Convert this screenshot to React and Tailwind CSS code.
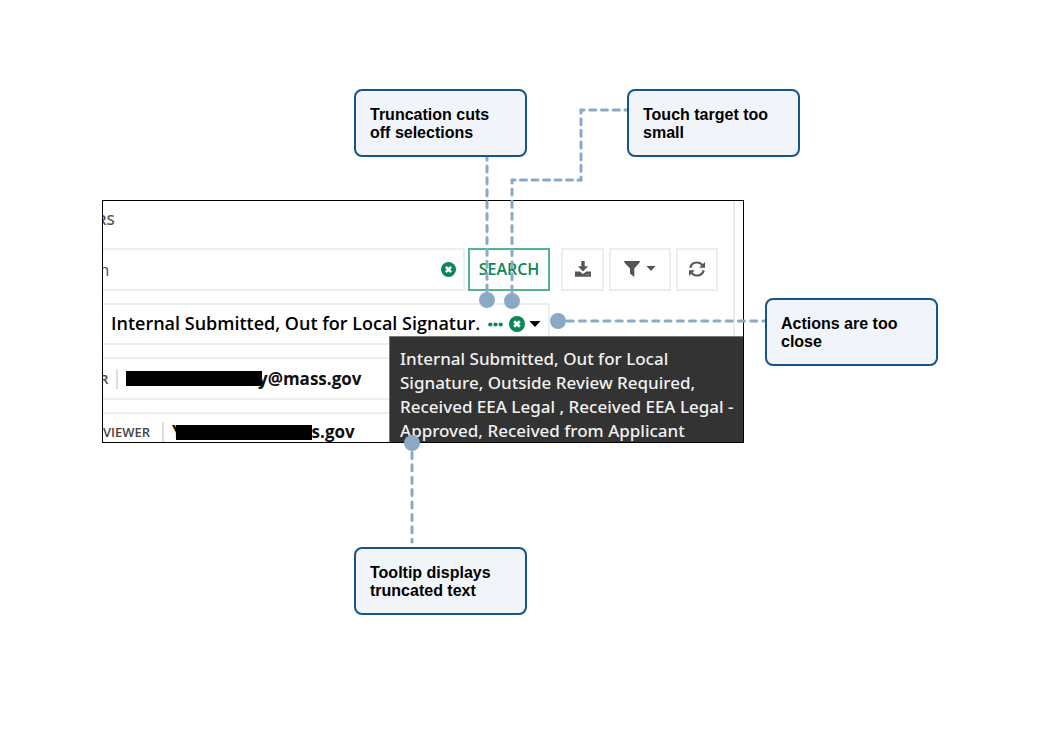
import React from "react";

const DOT = "#8aa9c6";

function XCircle({ className }) {
  return (
    <svg viewBox="0 0 16 16" className={className} aria-hidden="true">
      <circle cx="8" cy="8" r="8" fill="#0a8754" />
      <path d="M5.2 5.2l5.6 5.6M10.8 5.2l-5.6 5.6" stroke="#fff" strokeWidth="2.7" />
    </svg>
  );
}

function Caret({ className }) {
  return (
    <svg viewBox="0 0 12 6" className={className} fill="currentColor" aria-hidden="true">
      <path d="M.5 0h11L6 6z" />
    </svg>
  );
}

function DownloadIcon() {
  return (
    <svg viewBox="0 0 16 16" className="size-4" fill="currentColor" aria-hidden="true">
      <path d="M6.3 0h3.4v5.2H13L8 10.4 3 5.2h3.3z" />
      <path d="M0 10.6h4.8L8 13l3.2-2.4H16v5.2H0z" />
      <path d="M10.8 13.3h1v1h-1zM13.2 13.3h1v1h-1z" fill="#bbb" />
    </svg>
  );
}

function FilterIcon() {
  return (
    <svg viewBox="0 0 16 16" className="size-4" fill="currentColor" aria-hidden="true">
      <path d="M.3 0h15.4v1.4L10.3 7.6V16L6 12.4V7.6L.3 1.4z" />
    </svg>
  );
}

function RefreshIcon() {
  return (
    <svg viewBox="0 0 16 16" className="size-4" fill="none" stroke="currentColor" strokeWidth="2.2" aria-hidden="true">
      <path d="M1.3 6.8C2 3.6 4.8 1.5 8 1.5c2.2 0 4.100.9 5.400 2.600" />
      <path d="M14.700 9.200C14 12.400 11.200 14.500 8 14.500c-2.200 0-4.100-.9-5.400-2.600" />
      <path d="M16 1v5.800h-5.800zM0 15V9.200h5.800z" fill="currentColor" stroke="none" />
    </svg>
  );
}

function ToolButton({ label, className, children }) {
  return (
    <button type="button" aria-label={label} className={`flex items-center justify-center border-2 border-[#eeeeee] pb-0.5 text-[#555] ${className}`}>
      {children}
    </button>
  );
}

function Callout({ className, children }) {
  return (
    <div className={`absolute h-[68px] w-[173px] rounded-lg border-2 border-[#15558f] bg-[#f1f5fa] px-3.5 pt-[15px] text-base leading-[18px] font-bold text-black ${className}`}>
      <p>{children}</p>
    </div>
  );
}

function Connectors() {
  return (
    <svg className="pointer-events-none absolute top-0 left-0 h-[756px] w-[1040px]" viewBox="0 0 1040 756" aria-hidden="true">
      <g stroke={DOT} strokeWidth="3" strokeLinecap="round" strokeDashoffset="3" fill="none">
        <path d="M487 157V300" strokeDasharray="6 5.92" />
        <path d="M628 110H581" strokeDasharray="6 5.75" />
        <path d="M581 110V180" strokeDasharray="6 5.67" />
        <path d="M581 180H512" strokeDasharray="6 5.5" />
        <path d="M512 180V301" strokeDasharray="6 6.1" />
        <path d="M558 321H766" strokeDasharray="6 6.23" />
        <path d="M412 443V542" strokeDasharray="6 6.4" />
      </g>
      <g fill={DOT}>
        <circle cx="487" cy="300" r="8" />
        <circle cx="512" cy="301" r="8" />
        <circle cx="558" cy="321" r="8" />
        <circle cx="412" cy="443" r="8" />
      </g>
    </svg>
  );
}

function FilterPanel() {
  return (
    <section className="absolute top-[200px] left-[102px] h-[243px] w-[642px] overflow-hidden border border-black bg-white font-['Open_Sans',sans-serif]">
      <div className="h-full w-[632px] border-r-2 border-[#ebebeb]">
        <h2 className="-ml-1.5 h-[47px] pt-1.5 text-[15px] leading-6 font-semibold text-[#555]">RS</h2>
        <div className="flex h-[43px]">
          <div className="-ml-1 flex w-[366px] items-center border-y-2 border-r-2 border-[#eeeeee] pr-[7px]">
            <input aria-label="Search" defaultValue="h" className="min-w-0 flex-1 text-[17px] text-[#555] outline-none" />
            <button type="button" aria-label="Clear search">
              <XCircle className="size-[15px]" />
            </button>
          </div>
          <button type="button" className="ml-[3px] w-[82px] border-2 border-[#55b48d] pb-0.5 text-base font-semibold text-[#0a8754]">
            SEARCH
          </button>
          <ToolButton label="Download" className="ml-[11px] w-[43px]">
            <DownloadIcon />
          </ToolButton>
          <ToolButton label="Filter" className="ml-[5px] w-[62px] gap-1.5">
            <FilterIcon />
            <Caret className="h-[5px] w-2.5" />
          </ToolButton>
          <ToolButton label="Refresh" className="ml-[5px] w-[42px]">
            <RefreshIcon />
          </ToolButton>
        </div>
        <div className="mt-3 flex h-[42px] w-[447px] items-center border-y-2 border-r-2 border-[#eeeeee] pr-[7px] pl-2 text-lg leading-6 font-semibold whitespace-nowrap text-black">
          <span className="pb-0.5">Internal Submitted, Out for Local Signatur.</span>
          <button type="button" aria-label="More" className="ml-auto">
            <svg viewBox="0 0 15 5" className="h-[5px] w-[15px]" fill="#0a8754" aria-hidden="true">
              <circle cx="2.3" cy="2.5" r="2.1" />
              <circle cx="7.5" cy="2.5" r="2.1" />
              <circle cx="12.7" cy="2.5" r="2.1" />
            </svg>
          </button>
          <button type="button" aria-label="Clear selection" className="ml-1.5">
            <XCircle className="size-4" />
          </button>
          <button type="button" aria-label="Open list" className="ml-1">
            <Caret className="h-1.5 w-3" />
          </button>
        </div>
        <div className="mt-3 flex h-[43px] w-[448px] items-center border-y-2 border-[#eeeeee] text-[#111]">
          <span className="-ml-[3px] w-[18px] border-r-2 border-[#ddd] text-[13px] leading-5 font-semibold text-[#444]">R</span>
          <span className="ml-2 h-[15px] w-[136px] bg-black" />
          <span className="-ml-1 text-[17px] font-bold">y@mass.gov</span>
        </div>
        <div className="mt-3 flex h-[42px] w-[448px] items-center border-y-2 border-[#eeeeee] pb-0.5 text-[#111]">
          <span className="w-[61px] border-r-2 border-[#ddd] text-[13px] leading-5 font-semibold text-[#444]">VIEWER</span>
          <span className="ml-2 text-[17px] font-bold">Y</span>
          <span className="z-10 -ml-[7px] h-[15px] w-[136px] bg-black" />
          <span className="text-[17px] font-bold">s.gov</span>
        </div>
      </div>
      <div role="tooltip" className="absolute top-[135px] left-[286px] h-[120px] w-[370px] border-t border-l border-[#777] bg-[#333] pt-2.5 pl-2.5 font-['Noto_Sans','Open_Sans',sans-serif] text-[17px] leading-6 font-medium whitespace-nowrap text-[#f0f0f0]">
        Internal Submitted, Out for Local
        <br />
        Signature, Outside Review Required,
        <br />
        Received EEA Legal , Received EEA Legal -
        <br />
        Approved, Received from Applicant
      </div>
    </section>
  );
}

export default function App() {
  return (
    <main className="relative min-h-screen overflow-hidden bg-white font-['Liberation_Sans',Arial,sans-serif]">
      <FilterPanel />
      <Connectors />
      <Callout className="top-[89px] left-[354px]">
        Truncation cuts
        <br />
        off selections
      </Callout>
      <Callout className="top-[89px] left-[627px]">
        Touch target too
        <br />
        small
      </Callout>
      <Callout className="top-[298px] left-[765px]">
        Actions are too
        <br />
        close
      </Callout>
      <Callout className="top-[547px] left-[354px]">
        Tooltip displays
        <br />
        truncated text
      </Callout>
    </main>
  );
}
